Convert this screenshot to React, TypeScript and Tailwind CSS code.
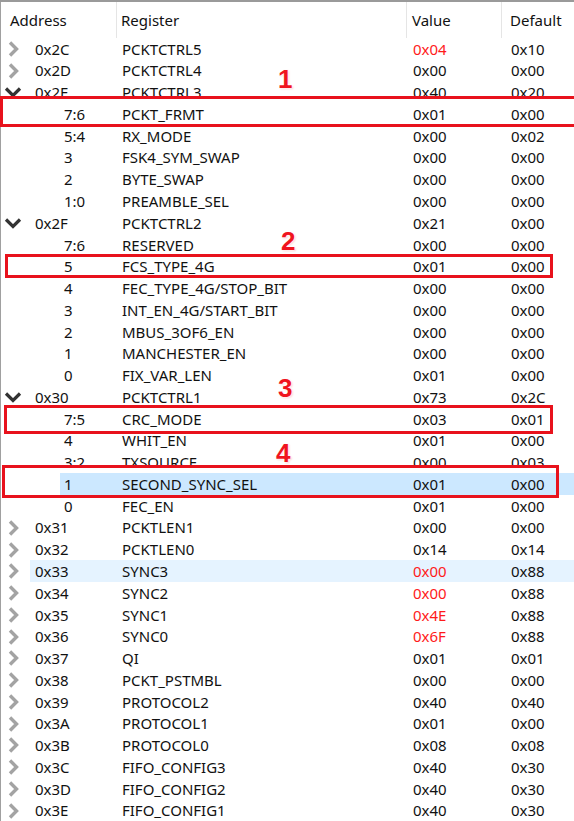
import React from "react";

type Row = { a: string; r: string; v: string; d: string; kind: "col" | "exp" | "bit"; red?: boolean; sel?: boolean; hover?: boolean };

const rows: Row[] = [
  { a: "0x2C", r: "PCKTCTRL5", v: "0x04", d: "0x10", kind: "col", red: true },
  { a: "0x2D", r: "PCKTCTRL4", v: "0x00", d: "0x00", kind: "col" },
  { a: "0x2E", r: "PCKTCTRL3", v: "0x40", d: "0x20", kind: "exp" },
  { a: "7:6", r: "PCKT_FRMT", v: "0x01", d: "0x00", kind: "bit" },
  { a: "5:4", r: "RX_MODE", v: "0x00", d: "0x02", kind: "bit" },
  { a: "3", r: "FSK4_SYM_SWAP", v: "0x00", d: "0x00", kind: "bit" },
  { a: "2", r: "BYTE_SWAP", v: "0x00", d: "0x00", kind: "bit" },
  { a: "1:0", r: "PREAMBLE_SEL", v: "0x00", d: "0x00", kind: "bit" },
  { a: "0x2F", r: "PCKTCTRL2", v: "0x21", d: "0x00", kind: "exp" },
  { a: "7:6", r: "RESERVED", v: "0x00", d: "0x00", kind: "bit" },
  { a: "5", r: "FCS_TYPE_4G", v: "0x01", d: "0x00", kind: "bit" },
  { a: "4", r: "FEC_TYPE_4G/STOP_BIT", v: "0x00", d: "0x00", kind: "bit" },
  { a: "3", r: "INT_EN_4G/START_BIT", v: "0x00", d: "0x00", kind: "bit" },
  { a: "2", r: "MBUS_3OF6_EN", v: "0x00", d: "0x00", kind: "bit" },
  { a: "1", r: "MANCHESTER_EN", v: "0x00", d: "0x00", kind: "bit" },
  { a: "0", r: "FIX_VAR_LEN", v: "0x01", d: "0x00", kind: "bit" },
  { a: "0x30", r: "PCKTCTRL1", v: "0x73", d: "0x2C", kind: "exp" },
  { a: "7:5", r: "CRC_MODE", v: "0x03", d: "0x01", kind: "bit" },
  { a: "4", r: "WHIT_EN", v: "0x01", d: "0x00", kind: "bit" },
  { a: "3:2", r: "TXSOURCE", v: "0x00", d: "0x03", kind: "bit" },
  { a: "1", r: "SECOND_SYNC_SEL", v: "0x01", d: "0x00", kind: "bit", sel: true },
  { a: "0", r: "FEC_EN", v: "0x01", d: "0x00", kind: "bit" },
  { a: "0x31", r: "PCKTLEN1", v: "0x00", d: "0x00", kind: "col" },
  { a: "0x32", r: "PCKTLEN0", v: "0x14", d: "0x14", kind: "col" },
  { a: "0x33", r: "SYNC3", v: "0x00", d: "0x88", kind: "col", red: true, hover: true },
  { a: "0x34", r: "SYNC2", v: "0x00", d: "0x88", kind: "col", red: true },
  { a: "0x35", r: "SYNC1", v: "0x4E", d: "0x88", kind: "col", red: true },
  { a: "0x36", r: "SYNC0", v: "0x6F", d: "0x88", kind: "col", red: true },
  { a: "0x37", r: "QI", v: "0x01", d: "0x01", kind: "col" },
  { a: "0x38", r: "PCKT_PSTMBL", v: "0x00", d: "0x00", kind: "col" },
  { a: "0x39", r: "PROTOCOL2", v: "0x40", d: "0x40", kind: "col" },
  { a: "0x3A", r: "PROTOCOL1", v: "0x01", d: "0x00", kind: "col" },
  { a: "0x3B", r: "PROTOCOL0", v: "0x08", d: "0x08", kind: "col" },
  { a: "0x3C", r: "FIFO_CONFIG3", v: "0x40", d: "0x30", kind: "col" },
  { a: "0x3D", r: "FIFO_CONFIG2", v: "0x40", d: "0x30", kind: "col" },
  { a: "0x3E", r: "FIFO_CONFIG1", v: "0x40", d: "0x30", kind: "col" },
];

function Chevron({ open }: { open: boolean }) {
  if (open) {
    return (
      <svg width="18" height="12" viewBox="0 0 18 12" className="ml-[3px] shrink-0">
        <polyline points="2,2.5 9,9.5 16,2.5" fill="none" stroke="#333" strokeWidth="3.2" />
      </svg>
    );
  }
  return (
    <svg width="12" height="16" viewBox="0 0 12 16" className="ml-[6px] shrink-0">
      <polyline points="3,1.5 9.5,8 3,14.5" fill="none" stroke="#a3a3a3" strokeWidth="3.4" />
    </svg>
  );
}

function Cell({ children, className }: { children: React.ReactNode; className?: string }) {
  return <div className={"flex items-center whitespace-nowrap " + (className ?? "")}>{children}</div>;
}

function TableRow({ row }: { row: Row }) {
  const isBit = row.kind === "bit";
  return (
    <div className="relative flex h-[21.77px] items-center">
      {row.sel && <div className="absolute inset-y-0 left-[59px] right-0 bg-[#cce8ff]" />}
      {row.hover && <div className="absolute inset-y-0 left-[29px] right-0 bg-[#e5f3ff]" />}
      <Cell className="relative w-[121px] shrink-0">
        {isBit ? (
          <span className="pl-[63px]">{row.a}</span>
        ) : (
          <>
            <span className="flex w-[34px] items-center">
              <Chevron open={row.kind === "exp"} />
            </span>
            <span>{row.a}</span>
          </>
        )}
      </Cell>
      <Cell className="relative w-[291px] shrink-0">{row.r}</Cell>
      <Cell className={"relative w-[98px] shrink-0 " + (row.red ? "text-[#ff1a1a]" : "")}>{row.v}</Cell>
      <Cell className="relative flex-1">{row.d}</Cell>
    </div>
  );
}

function Num({ n, className }: { n: string; className: string }) {
  return (
    <div
      className={
        "absolute text-[26px] font-bold leading-none text-[#f0141e] [text-shadow:0_0_2px_#fff,0_0_2px_#fff,0_0_3px_#fff,1px_1px_2px_#fbb] " +
        className
      }
      style={{ fontFamily: '"Liberation Sans", Arial, sans-serif' }}
    >
      {n}
    </div>
  );
}

export default function App() {
  return (
    <div
      className="relative h-[821px] w-[574px] overflow-hidden bg-white text-[15px] text-[#111]"
      style={{ fontFamily: '"Noto Sans", "Open Sans", sans-serif' }}
    >
      <div className="h-[2px] bg-[#9a9a9a]" />
      <div className="flex border-l border-[#a0a0a0]">
        <div className="flex-1">
          <div className="flex h-[36px] items-center">
            <div className="flex h-full w-[116px] shrink-0 items-center border-r border-[#e5e5e5] pl-[9px]">Address</div>
            <div className="flex h-full w-[290px] shrink-0 items-center border-r border-[#e5e5e5] pl-[4px]">Register</div>
            <div className="flex h-full w-[95px] shrink-0 items-center border-r border-[#e5e5e5] pl-[5px]">Value</div>
            <div className="flex h-full flex-1 items-center pl-[8px]">Default</div>
          </div>
          {rows.map((r, i) => (
            <TableRow key={i} row={r} />
          ))}
        </div>
      </div>

      {/* annotation boxes */}
      <div className="absolute left-0 top-[96px] h-[31px] w-[580px] border-[3px] border-[#e8121c]" />
      <div className="absolute left-[5px] top-[254px] h-[24px] w-[548px] border-[3px] border-[#e8121c]" />
      <div className="absolute left-[4px] top-[405px] h-[29px] w-[549px] border-[3px] border-[#e8121c]" />
      <div className="absolute left-[2px] top-[465px] h-[33px] w-[557px] border-[3px] border-[#e8121c]" />

      <Num n="1" className="left-[278px] top-[66px]" />
      <Num n="2" className="left-[281px] top-[228px]" />
      <Num n="3" className="left-[278px] top-[375px]" />
      <Num n="4" className="left-[276px] top-[440px]" />
    </div>
  );
}
